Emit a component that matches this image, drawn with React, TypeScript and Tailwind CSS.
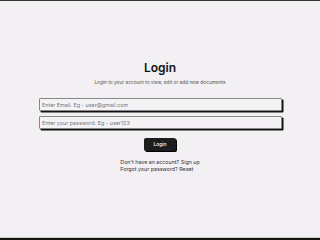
import React from "react";

export default function App() {
  return (
    <div
      className="w-[320px] h-[240px] flex flex-col bg-[#f2f0f3] overflow-hidden"
      style={{ fontFamily: "Inter, 'Noto Sans', sans-serif" }}
    >
      <div className="h-px bg-[#333333]" />
      <div className="flex-1 flex flex-col items-center">
        <h1 className="mt-[60px] text-[12px] leading-[14px] font-semibold text-[#111]">Login</h1>
        <p className="mt-[4px] text-[4.8px] leading-[6px] text-[#555]">
          Login to your account to view, edit or add new documents
        </p>
        <div className="mt-[13px] w-[243px] flex flex-col gap-[5px] self-start ml-[39px]">
          <input
            className="h-[13px] w-full border border-[#888] rounded-[1px] bg-[#f4f2f5] px-[2px] text-[5.4px] shadow-[1.5px_1.5px_0_#111] placeholder:text-[#777] outline-none"
            placeholder="Enter Email. Eg - user@gmail.com"
          />
          <input
            className="h-[13px] w-full border border-[#888] rounded-[1px] bg-[#f4f2f5] px-[2px] text-[5.4px] shadow-[1.5px_1.5px_0_#111] placeholder:text-[#777] outline-none"
            placeholder="Enter your password. Eg - user123"
          />
        </div>
        <button className="mt-[9px] w-[32px] h-[13px] rounded-[2px] bg-[#1d1d1f] text-white text-[5px] font-medium shadow-[1px_1px_0_#000]">
          Login
        </button>
        <div className="mt-[8px] flex flex-col items-start text-[5.3px] leading-[7px] text-[#333]">
          <span>Don't have an account? Sign up</span>
          <span>Forgot your password? Reset</span>
        </div>
      </div>
      <div className="h-px bg-[#c8c8c8]" />
      <div className="h-[2px] bg-[#151510]" />
    </div>
  );
}
